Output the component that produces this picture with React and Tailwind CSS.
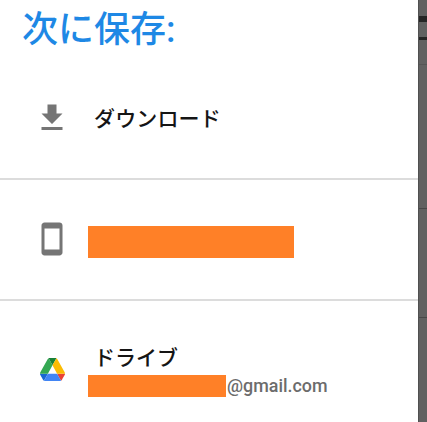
/**
 * Save destination picker
 *
 * Drawer listing the places a file can be saved to.
 */

function DownloadIcon() {
  return (
    <svg className="h-9 w-9" viewBox="0 0 24 24" fill="#757575">
      <path d="M19 9h-4V3H9v6H5l7 7 7-7zM5 18v2h14v-2H5z" />
    </svg>
  );
}

function PhoneIcon() {
  return (
    <svg className="mb-px h-9 w-9" viewBox="0 0 24 24" fill="#757575">
      <path d="M17 1.01L7 1c-1.1 0-2 .9-2 2v18c0 1.1.9 2 2 2h10c1.1 0 2-.9 2-2V3c0-1.1-.9-1.99-2-1.99zM17 19H7V5h10v14z" />
    </svg>
  );
}

function DriveIcon() {
  return (
    <svg className="h-[23px] w-[25px]" viewBox="0 0 87.3 78" preserveAspectRatio="none">
      <path fill="#1967d2" d="m6.6 66.85 3.85 6.65c.8 1.4 1.95 2.5 3.3 3.3l13.75-23.8h-27.5c0 1.55.4 3.1 1.2 4.5z" />
      <path fill="#34a853" d="m43.65 25-13.75-23.8c-1.35.8-2.5 1.9-3.3 3.3l-25.4 44a9.06 9.06 0 0 0 -1.2 4.5h27.5z" />
      <path fill="#ea4335" d="m73.55 76.8c1.35-.8 2.5-1.9 3.3-3.3l1.6-2.75 7.65-13.25c.8-1.4 1.2-2.95 1.2-4.5h-27.5l5.85 11.5z" />
      <path fill="#188038" d="m43.65 25 13.75-23.8c-1.35-.8-2.9-1.2-4.5-1.2h-18.5c-1.6 0-3.15.45-4.5 1.2z" />
      <path fill="#4285f4" d="m59.8 53h-32.3l-13.75 23.8c1.35.8 2.9 1.2 4.5 1.2h50.8c1.6 0 3.15-.45 4.5-1.2z" />
      <path fill="#fbbc04" d="m73.4 26.5-12.7-22c-.8-1.4-1.95-2.5-3.3-3.3l-13.75 23.8 16.15 28h27.45c0-1.55-.4-3.1-1.2-4.5z" />
    </svg>
  );
}

function Row({ icon, children, className = '' }) {
  return (
    <li className={`flex items-center ${className}`}>
      <span className="ml-[34px] flex w-9 shrink-0 justify-center">{icon}</span>
      <div className="ml-[18px]">{children}</div>
    </li>
  );
}

// Page content visible behind the drawer
function Backdrop() {
  return (
    <div className="flex flex-1 flex-col border-l border-[#505050] bg-[#616161]">
      <div className="mt-4 h-1.5 bg-[#252525]" />
      <div className="mt-[15px] h-[3px] bg-[#252525]" />
      <div className="mt-6 h-px bg-[#555555]" />
      <div className="mt-[143px] h-px bg-[#484848]" />
      <div className="mt-[108px] h-px bg-[#484848]" />
    </div>
  );
}

export default function App() {
  return (
    <div className="flex h-[422px] w-[427px] overflow-hidden bg-white font-['Noto_Sans_CJK_JP',sans-serif]">
      <main className="flex w-[418px] shrink-0 flex-col">
        <h1 className="h-[57px] pt-[3px] pl-[22px] font-['Roboto','Noto_Sans_CJK_JP',sans-serif] text-[36px] leading-[54px] font-medium text-[#1e88e5]">
          次に保存:
        </h1>
        <ul className="flex flex-1 flex-col">
          <Row
            icon={<DownloadIcon />}
            className="h-[123px] border-b-2 border-[#dcdcdc]"
          >
            <p className="mb-0.5 pl-1.5 text-[21px] leading-8 font-medium tracking-[0.15px] text-[#151515]">
              ダウンロード
            </p>
          </Row>
          <Row
            icon={<PhoneIcon />}
            className="h-[121px] border-b-2 border-[#dcdcdc]"
          >
            <div className="mt-1 h-8 w-[206px] bg-[#ff8027]" />
          </Row>
          <Row icon={<DriveIcon />} className="h-[121px] pt-[15px]">
            <p className="mb-[3px] pl-1.5 text-[21px] leading-[31px] font-medium text-[#151515]">ドライブ</p>
            <div className="flex items-center">
              <div className="h-[22px] w-[138px] bg-[#ff8027]" />
              <span className="pl-px font-['Roboto',sans-serif] text-[17.9px] leading-[20px] font-medium text-[#6c6c6c]">
                @gmail.com
              </span>
            </div>
          </Row>
        </ul>
      </main>
      <Backdrop />
    </div>
  );
}
